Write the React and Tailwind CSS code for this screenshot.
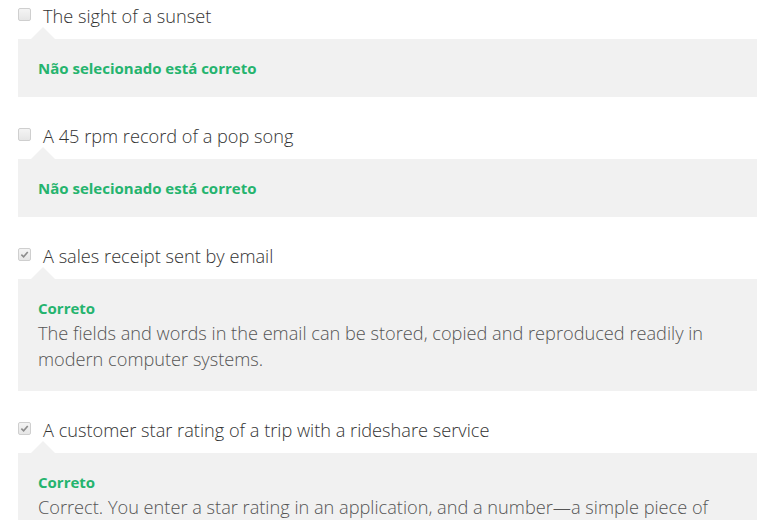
import React from "react";

const items = [
  {
    label: "The sight of a sunset",
    checked: false,
    title: "Não selecionado está correto",
  },
  {
    label: "A 45 rpm record of a pop song",
    checked: false,
    title: "Não selecionado está correto",
  },
  {
    label: "A sales receipt sent by email",
    checked: true,
    title: "Correto",
    body: "The fields and words in the email can be stored, copied and reproduced readily in modern computer systems.",
  },
  {
    label: "A customer star rating of a trip with a rideshare service",
    checked: true,
    title: "Correto",
    body: "Correct. You enter a star rating in an application, and a number—a simple piece of structured data—is stored and can be easily analyzed.",
  },
];

const Box = ({ checked }) => (
  <div className="w-[13px] h-[13px] rounded-[2px] border border-[#cfcfcf] bg-gradient-to-b from-[#f4f4f4] to-[#e6e6e6] flex items-center justify-center">
    {checked && (
      <svg width="9" height="9" viewBox="0 0 10 10">
        <path d="M1.5 5.2 L4 7.6 L8.6 2.2" fill="none" stroke="#8c8c8c" strokeWidth="1.8" />
      </svg>
    )}
  </div>
);

const App = () => {
  return (
    <div
      className="bg-white min-h-screen pl-[18px] pr-[19px] pt-[4px]"
      style={{ fontFamily: '"Open Sans", sans-serif' }}
    >
      {items.map((item, i) => (
        <div key={i} className={i > 0 ? "mt-[27px]" : ""}>
          {/* option row */}
          <div className="flex items-center h-[24px]">
            <div className="mt-[-3px]">
              <Box checked={item.checked} />
            </div>
            <span className="ml-[12px] text-[18.2px] font-light text-[#333333] leading-[24px]">
              {item.label}
            </span>
          </div>

          {/* feedback */}
          <div className="relative mt-[11px] bg-[#f1f1f1] px-[20px] pt-[19px] pb-[19px]">
            <div className="absolute left-[13px] top-[-12px] w-0 h-0 border-l-[12px] border-r-[12px] border-b-[12px] border-l-transparent border-r-transparent border-b-[#f1f1f1]" />
            <p className="text-[15px] font-bold text-[#25b46e] leading-[20px]">
              {item.title}
            </p>
            {item.body && (
              <p className="mt-[2px] text-[18.2px] font-light text-[#555555] leading-[26px]">
                {item.body}
              </p>
            )}
          </div>
        </div>
      ))}
    </div>
  );
};

export default App;
